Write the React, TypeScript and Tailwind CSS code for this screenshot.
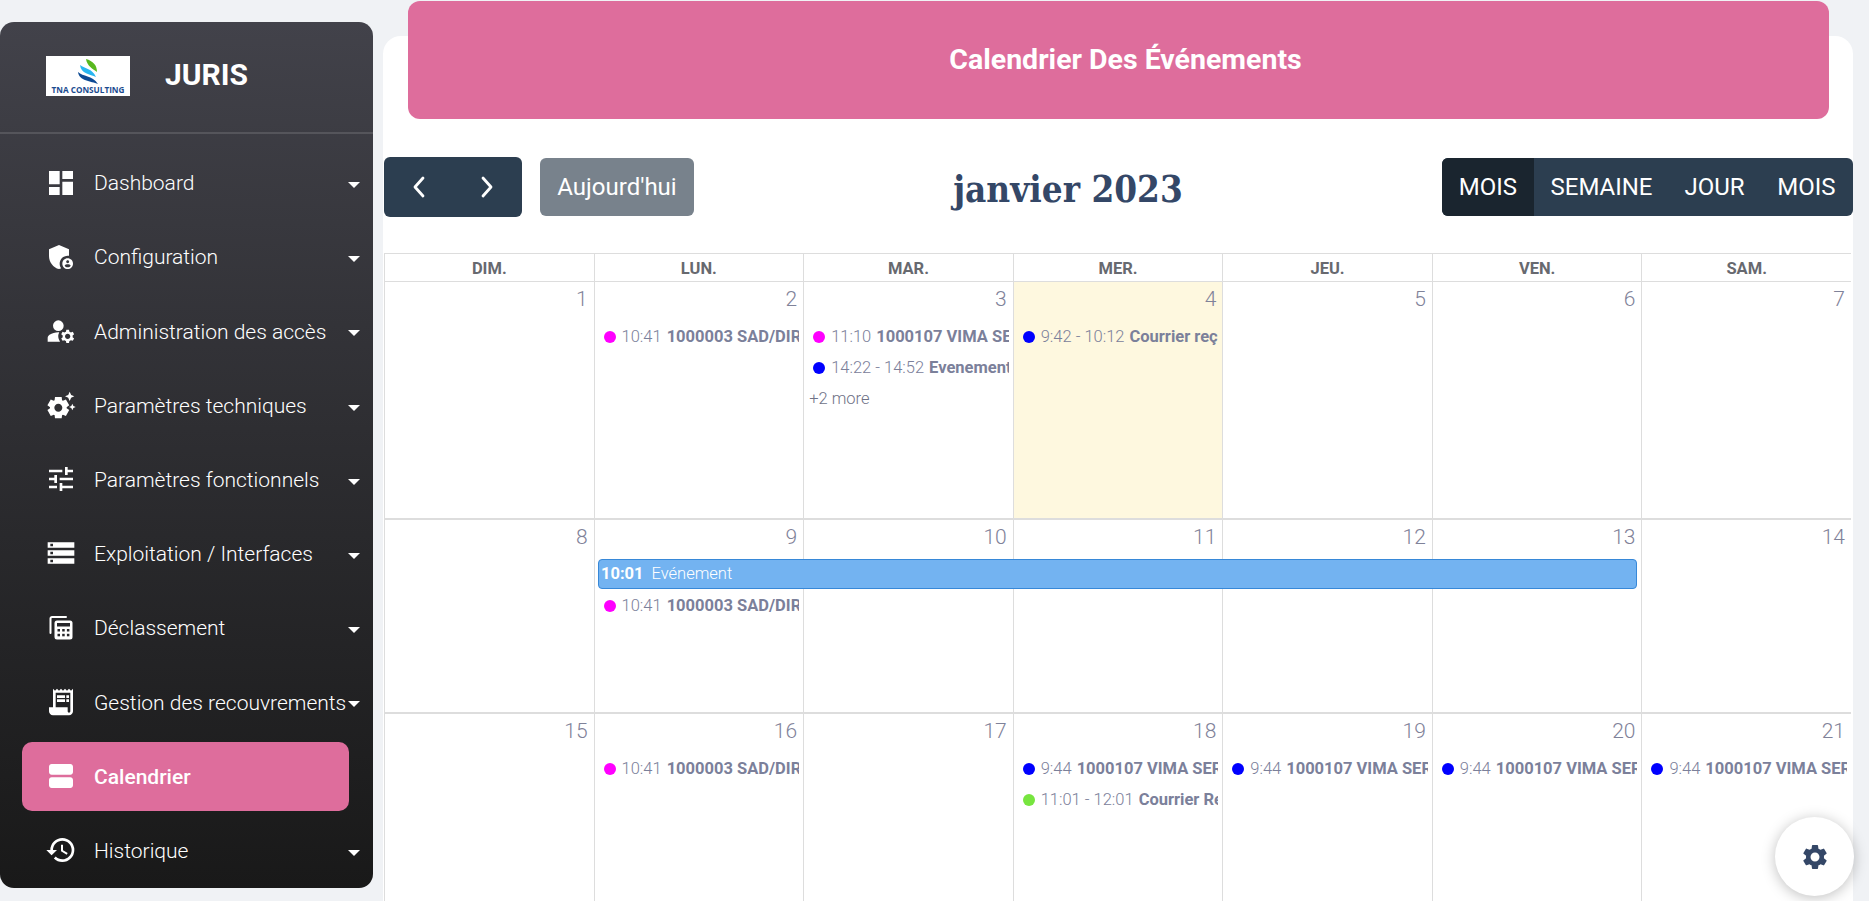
import React from "react";
import {
  MdDashboard,
  MdAdminPanelSettings,
  MdManageAccounts,
  MdSettingsSuggest,
  MdTune,
  MdStorage,
  MdReceiptLong,
  MdViewAgenda,
  MdHistory,
  MdSettings,
} from "react-icons/md";

function CalcIcon({ className }: { className?: string }) {
  return (
    <svg viewBox="-4 -4 32 32" className={className} fill="none">
      <path d="M1.500 17V2.500A1.500 1.500 0 0 1 3 1H17" stroke="currentColor" strokeWidth="2" strokeLinecap="round" />
      <rect x="5.500" y="4.500" width="18" height="19" rx="2.500" fill="currentColor" />
      <rect x="8" y="7" width="13" height="3.500" fill="#26262a" />
      <g fill="#26262a">
        <rect x="8.500" y="13" width="2.500" height="2.500" />
        <rect x="13.200" y="13" width="2.500" height="2.500" />
        <rect x="17.900" y="13" width="2.500" height="2.500" />
        <rect x="8.500" y="17.800" width="2.500" height="2.500" />
        <rect x="13.200" y="17.800" width="2.500" height="2.500" />
        <rect x="17.900" y="17.800" width="2.500" height="2.500" />
      </g>
    </svg>
  );
}

const menu: { label: string; Icon: React.ComponentType<{ className?: string }>; active?: boolean }[] = [
  { label: "Dashboard", Icon: MdDashboard },
  { label: "Configuration", Icon: MdAdminPanelSettings },
  { label: "Administration des accès", Icon: MdManageAccounts },
  { label: "Paramètres techniques", Icon: MdSettingsSuggest },
  { label: "Paramètres fonctionnels", Icon: MdTune },
  { label: "Exploitation / Interfaces", Icon: MdStorage },
  { label: "Déclassement", Icon: CalcIcon },
  { label: "Gestion des recouvrements", Icon: MdReceiptLong },
  { label: "Calendrier", Icon: MdViewAgenda, active: true },
  { label: "Historique", Icon: MdHistory },
];

type Ev = { dot: string; time: string; title: string };
type Day = { n: number; events?: (Ev | null)[]; more?: string; today?: boolean };

const MAG = "bg-[#ff00ff]";
const BLU = "bg-[#0000ff]";
const GRN = "bg-[#77e53f]";
const sad: Ev = { dot: MAG, time: "10:41", title: "1000003 SAD/DIR" };
const vima: Ev = { dot: BLU, time: "9:44", title: "1000107 VIMA SERVICES" };

const weeks: { h: string; days: Day[]; bar?: boolean }[] = [
  {
    h: "h-[238px]",
    days: [
      { n: 1 },
      { n: 2, events: [sad] },
      {
        n: 3,
        events: [
          { dot: MAG, time: "11:10", title: "1000107 VIMA SERVICES" },
          { dot: BLU, time: "14:22 - 14:52", title: "Evenement test" },
        ],
        more: "+2 more",
      },
      { n: 4, today: true, events: [{ dot: BLU, time: "9:42 - 10:12", title: "Courrier reçu test" }] },
      { n: 5 },
      { n: 6 },
      { n: 7 },
    ],
  },
  {
    h: "h-[194px]",
    bar: true,
    days: [
      { n: 8 },
      { n: 9, events: [null, sad] },
      { n: 10 },
      { n: 11 },
      { n: 12 },
      { n: 13 },
      { n: 14 },
    ],
  },
  {
    h: "h-[240px]",
    days: [
      { n: 15 },
      { n: 16, events: [sad] },
      { n: 17 },
      { n: 18, events: [vima, { dot: GRN, time: "11:01 - 12:01", title: "Courrier Reçu test" }] },
      { n: 19, events: [vima] },
      { n: 20, events: [vima] },
      { n: 21, events: [vima] },
    ],
  },
];

function EventRow({ ev }: { ev: Ev }) {
  return (
    <div className="mr-[4px] flex h-[31px] items-center overflow-hidden whitespace-nowrap pl-[9px] text-[16.500px]">
      <span className={`mb-[1px] mr-[6px] h-[12px] w-[12px] shrink-0 rounded-full ${ev.dot}`} />
      <span className="mr-[5px] font-light text-[#7b809a]">{ev.time}</span>
      <span className="font-bold text-[#7b809a]">{ev.title}</span>
    </div>
  );
}

function Logo() {
  return (
    <svg viewBox="0 0 84 40" className="h-[40px] w-[84px] shrink-0 bg-white">
      <path d="M40 3C47 5 51 9 51 16C47 13 41 10 40 3Z" fill="#58b81e" />
      <path d="M34 9C39 13 46 12 50 21C44 18 35 18 34 9Z" fill="#29b6f0" />
      <path d="M32 16C37 21 46 19 52 28C45 25 33 25 32 16Z" fill="#0d4a94" />
      <text x="42" y="37" textAnchor="middle" fontSize="8.200" fontWeight="700" fill="#1b4b8f" fontFamily="'Open Sans', sans-serif">
        TNA CONSULTING
      </text>
    </svg>
  );
}

export default function App() {
  return (
    <div className="flex h-[901px] w-[1869px] overflow-hidden bg-[#f0f2f5] font-['Roboto',sans-serif]">
      <aside className="mt-[22px] h-[866px] w-[373px] shrink-0 rounded-[14px] bg-gradient-to-b from-[#42424a] to-[#191919] text-white">
        <div className="flex h-[112px] items-center border-b-2 border-[#55555b] pb-[3px] pl-[46px]">
          <Logo />
          <span className="mb-[2px] ml-[35px] text-[30px] font-bold">JURIS</span>
        </div>
        <nav className="mt-[14px] flex flex-col gap-[5.200px]">
          {menu.map(({ label, Icon, active }) => (
            <div
              key={label}
              className={`ml-[22px] flex h-[69px] w-[327px] items-center rounded-[10px] pl-[23px] ${active ? "bg-[#de6d9c] font-medium" : "font-light"}`}
            >
              <Icon className="h-[32px] w-[32px] shrink-0" />
              <span className="ml-[17px] whitespace-nowrap pt-[3px] text-[21px] text-white">{label}</span>
              {!active && (
                <span className="-mr-[11px] ml-auto mt-[5px] h-0 w-0 shrink-0 border-x-[6px] border-t-[6px] border-x-transparent border-t-white" />
              )}
            </div>
          ))}
        </nav>
      </aside>

      <main className="ml-[10px] mt-[36px] h-[865px] w-[1470px] shrink-0 rounded-t-[18px] bg-white pl-[1px]">
        <div className="mx-[24px] -mt-[35px] flex h-[118px] items-center justify-center rounded-[12px] bg-[#de6d9c] pl-[14px] text-[28.500px] font-bold text-white">
          Calendrier Des Événements
        </div>

        <div className="mt-[38px] flex h-[60px] items-center justify-between">
          <div className="flex items-center gap-[18px]">
            <div className="flex h-[60px] w-[138px] items-center justify-between rounded-[6px] bg-[#2c3e50] px-[28px]">
              <svg viewBox="0 0 14 22" className="h-[22px] w-[14px]" fill="none" stroke="white" strokeWidth="2.800" strokeLinecap="round" strokeLinejoin="round">
                <path d="M11 2L3 11L11 20" />
              </svg>
              <svg viewBox="0 0 14 22" className="h-[22px] w-[14px]" fill="none" stroke="white" strokeWidth="2.800" strokeLinecap="round" strokeLinejoin="round">
                <path d="M3 2L11 11L3 20" />
              </svg>
            </div>
            <div className="flex h-[58px] w-[154px] items-center justify-center rounded-[6px] bg-[#78828c] text-[24px] text-white">
              Aujourd'hui
            </div>
          </div>
          <h1 className="mt-[7px] font-['DejaVu_Serif_Condensed','DejaVu_Serif',serif] text-[36.500px] font-bold text-[#344767]">janvier 2023</h1>
          <div className="flex h-[58px] items-center overflow-hidden rounded-[6px] bg-[#2c3e50] text-[24px] text-white">
            <span className="flex h-full w-[92px] items-center justify-center bg-[#1a252f]">MOIS</span>
            <span className="flex h-full w-[135px] items-center justify-center">SEMAINE</span>
            <span className="flex h-full w-[91px] items-center justify-center">JOUR</span>
            <span className="flex h-full w-[93px] items-center justify-center">MOIS</span>
          </div>
        </div>

        <div className="mt-[36px] w-[1467px] border-t border-[#dddddd]">
          <div className="grid h-[28px] grid-cols-7 border-b border-[#dddddd]">
            {["DIM.", "LUN.", "MAR.", "MER.", "JEU.", "VEN.", "SAM."].map((d) => (
              <div key={d} className="flex items-center justify-center border-l border-[#dddddd] pt-[3px] text-[16.500px] font-bold text-[#67696f]">
                {d}
              </div>
            ))}
          </div>
          {weeks.map((w, i) => (
            <div key={i} className={`relative grid grid-cols-7 border-b-2 border-[#dddddd] ${w.h}`}>
              {w.days.map((d) => (
                <div key={d.n} className={`min-w-0 overflow-hidden border-l border-[#dddddd] ${d.today ? "bg-[#fef8df]" : ""}`}>
                  <div className="flex h-[40px] items-center justify-end pb-[4px] pr-[6px] text-[21px] font-light text-[#7f8299]">{d.n}</div>
                  {d.events?.map((ev, j) => (ev ? <EventRow key={j} ev={ev} /> : <div key={j} className="h-[31px]" />))}
                  {d.more && <div className="mt-[1px] flex h-[29px] items-center pl-[5px] text-[16.500px] font-light text-[#6f7287]">{d.more}</div>}
                </div>
              ))}
              {w.bar && (
                <div className="absolute left-[214px] top-[39px] flex h-[30px] w-[1039px] items-center rounded-[4px] border border-[#3788d8] bg-[#73b3f1] px-[2px] text-[16.500px] text-white">
                  <b className="mr-[8px] font-bold">10:01</b>
                  <span className="font-light">Evénement</span>
                </div>
              )}
            </div>
          ))}
        </div>
      </main>

      <div className="fixed bottom-[5px] right-[15px] flex h-[79px] w-[79px] items-center justify-center rounded-full bg-white text-[#344767] shadow-[0_2px_14px_rgba(0,0,0,0.25)]">
        <MdSettings className="h-[30px] w-[30px]" />
      </div>
    </div>
  );
}
